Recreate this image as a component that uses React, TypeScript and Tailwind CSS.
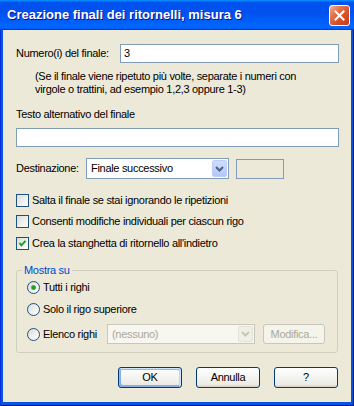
import React from 'react';

const font = "font-['Liberation_Sans',Arial,sans-serif]";

function CloseButton() {
  return (
    <div className="w-[21px] h-[21px] rounded-[3px] border border-white bg-[linear-gradient(135deg,#f0b49c_0%,#e3764f_30%,#d4532c_60%,#c23d17_100%)] flex items-center justify-center">
      <svg width="11" height="11" viewBox="0 0 11 11">
        <path d="M1.5 1.5 L9.5 9.5 M9.5 1.5 L1.5 9.5" stroke="white" strokeWidth="2" strokeLinecap="square" />
      </svg>
    </div>
  );
}

function Checkbox({ checked, label }: { checked?: boolean; label: string }) {
  return (
    <div className="flex items-center h-[13px]">
      <div className="w-[13px] h-[13px] border border-[#1c5180] bg-[linear-gradient(135deg,#dcdcd7,#ffffff)] flex items-center justify-center shrink-0">
        {checked && (
          <svg width="9" height="9" viewBox="0 0 9 9">
            <path d="M1.5 4 L3.5 6.3 L7.5 1.8" stroke="#21a121" strokeWidth="2" fill="none" />
          </svg>
        )}
      </div>
      <span className="ml-[3px] leading-[13px]">{label}</span>
    </div>
  );
}

function Radio({ checked }: { checked?: boolean }) {
  return (
    <div className="w-[13px] h-[13px] rounded-full border border-[#1c5180] bg-[linear-gradient(135deg,#dcdcd7,#ffffff)] flex items-center justify-center shrink-0">
      {checked && (
        <div className="w-[5px] h-[5px] rounded-full bg-[radial-gradient(circle,#21a121_40%,#7bd47a_100%)]" />
      )}
    </div>
  );
}

function DropArrow({ disabled }: { disabled?: boolean }) {
  return (
    <div
      className={
        disabled
          ? 'w-[15px] h-[16px] rounded-[2px] bg-[#f0efe6] border border-[#e4e2d6] flex items-center justify-center'
          : 'w-[15px] h-[17px] rounded-[2px] bg-[linear-gradient(180deg,#cfdefc,#b2c7f7)] border border-[#bccdf7] flex items-center justify-center'
      }
    >
      <svg width="9" height="6" viewBox="0 0 9 6">
        <path d="M1 1 L4.5 4.5 L8 1" stroke={disabled ? '#c9c7ba' : '#4d6185'} strokeWidth="2" fill="none" />
      </svg>
    </div>
  );
}

function Button({ children, primary, disabled, className = '' }: { children: React.ReactNode; primary?: boolean; disabled?: boolean; className?: string }) {
  const base = 'flex items-center justify-center rounded-[3px] border ';
  const look = disabled
    ? 'border-[#c9c7ba] bg-[#f5f4ea] text-[#aca899]'
    : primary
    ? 'border-[#003c74] bg-[linear-gradient(180deg,#ffffff,#ecebe6_86%,#d6d0c5)] shadow-[inset_-1px_1px_#cee7ff,inset_1px_2px_#98b8ea,inset_-2px_2px_#bcd4f6,inset_1px_-1px_#89ade4,inset_2px_-2px_#89ade4]'
    : 'border-[#003c74] bg-[linear-gradient(180deg,#ffffff,#ecebe6_86%,#d6d0c5)]';
  return <div className={base + look + ' ' + className}>{children}</div>;
}

export default function App() {
  return (
    <div className={`w-[354px] h-[406px] flex flex-col bg-[#0831d9] text-[11px] tracking-[-0.3px] text-black ${font}`}>
      {/* title bar */}
      <div className="h-[30px] shrink-0 flex items-center justify-between pl-[7px] pr-[4px] bg-[linear-gradient(180deg,#0997ff,#0053ee_8%,#0050ee_40%,#0066ff_88%,#0066ff_93%,#005bff_95%,#003dd7_96%,#003dd7)]">
        <span className="text-white font-bold text-[13px] tracking-normal [text-shadow:1px_1px_#0f1089] pb-[1px]">
          Creazione finali dei ritornelli, misura 6
        </span>
        <CloseButton />
      </div>

      {/* frame */}
      <div className="flex-1 flex flex-col px-[3px] pb-[4px] bg-[#0855dd] shadow-[inset_1px_0_#0831d9,inset_-1px_-1px_#00138c]">
        <div className="flex-1 bg-[#ece9d8] pl-[13px] pr-[12px] pt-[14px] flex flex-col">
          <div className="flex items-center h-[19px]">
            <span className="w-[104px] shrink-0">Numero(i) del finale:</span>
            <div className="flex-1 h-[19px] border border-[#7f9db9] bg-white px-[3px] flex items-center">3</div>
          </div>

          <p className="mt-[7px] ml-[19px] leading-[13px]">
            (Se il finale viene ripetuto più volte, separate i numeri con
            <br />
            virgole o trattini, ad esempio 1,2,3 oppure 1-3)
          </p>

          <div className="mt-[12px] leading-[13px]">Testo alternativo del finale</div>
          <div className="mt-[7px] h-[19px] border border-[#7f9db9] bg-white" />

          <div className="mt-[11px] flex items-center h-[21px]">
            <span className="w-[70px] shrink-0">Destinazione:</span>
            <div className="w-[143px] h-[21px] border border-[#7f9db9] bg-white flex items-center justify-between pl-[4px] pr-[1px]">
              <span>Finale successivo</span>
              <DropArrow />
            </div>
            <div className="ml-[7px] w-[48px] h-[20px] border border-[#7f9db9]" />
          </div>

          <div className="mt-[15px]">
            <Checkbox label="Salta il finale se stai ignorando le ripetizioni" />
          </div>
          <div className="mt-[8px]">
            <Checkbox label="Consenti modifiche individuali per ciascun rigo" />
          </div>
          <div className="mt-[9px]">
            <Checkbox checked label="Crea la stanghetta di ritornello all'indietro" />
          </div>

          <fieldset className="mt-[14px] mr-[1px] border border-[#d0d0bf] rounded-[3px] pl-[10px] pb-[8px]">
            <legend className="-ml-[5px] px-[2px] leading-[13px] text-[#0046d5]">Mostra su</legend>
            <div className="mt-[4px] flex items-center h-[13px]">
              <Radio checked />
              <span className="ml-[3px]">Tutti i righi</span>
            </div>
            <div className="mt-[9px] flex items-center h-[13px]">
              <Radio />
              <span className="ml-[3px]">Solo il rigo superiore</span>
            </div>
            <div className="mt-[8px] flex items-center h-[20px]">
              <div className="w-[80px] flex items-center shrink-0">
                <Radio />
                <span className="ml-[3px]">Elenco righi</span>
              </div>
              <div className="w-[148px] h-[20px] border border-[#c9c7ba] bg-[#f7f6f0] flex items-center justify-between pl-[4px] pr-[1px] text-[#aca899]">
                <span>(nessuno)</span>
                <DropArrow disabled />
              </div>
              <Button disabled className="ml-[8px] w-[62px] h-[20px]">
                Modifica...
              </Button>
            </div>
          </fieldset>

          <div className="mt-[14px] flex justify-end gap-[14px] pr-[1px]">
            <Button primary className="w-[64px] h-[21px]">OK</Button>
            <Button className="w-[64px] h-[21px]">Annulla</Button>
            <Button className="w-[64px] h-[21px]">?</Button>
          </div>
        </div>
      </div>
    </div>
  );
}
